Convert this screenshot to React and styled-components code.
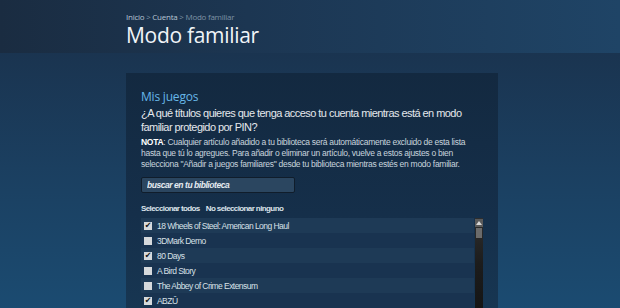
import React from "react";
import styled, { createGlobalStyle } from "styled-components";

const GlobalStyle = createGlobalStyle`
  html, body {
    margin: 0;
    padding: 0;
  }
  body {
    width: 620px;
    height: 308px;
    overflow: hidden;
    background: #1a3350;
    font-family: "Liberation Sans", Arial, sans-serif;
  }
`;

const games = [
  { name: "18 Wheels of Steel: American Long Haul", checked: true },
  { name: "3DMark Demo", checked: false },
  { name: "80 Days", checked: true },
  { name: "A Bird Story", checked: false },
  { name: "The Abbey of Crime Extensum", checked: false },
  { name: "ABZÛ", checked: true },
];

const App = () => {
  return (
    <Page>
      <GlobalStyle />
      <Header>
        <Crumbs>
          <a>Inicio</a> &gt; <a>Cuenta</a> &gt; <span>Modo familiar</span>
        </Crumbs>
        <Title>Modo familiar</Title>
      </Header>
      <Body>
        <Panel>
          <SectionTitle>Mis juegos</SectionTitle>
          <Question>
            ¿A qué títulos quieres que tenga acceso tu cuenta mientras está en modo
            <br />
            familiar protegido por PIN?
          </Question>
          <Note>
            <b>NOTA</b>: Cualquier artículo añadido a tu biblioteca será automáticamente excluido de esta lista
            <br />
            hasta que tú lo agregues. Para añadir o eliminar un artículo, vuelve a estos ajustes o bien
            <br />
            selecciona "Añadir a juegos familiares" desde tu biblioteca mientras estés en modo familiar.
          </Note>
          <Search placeholder="buscar en tu biblioteca" />
          <SelectLinks>
            <a>Seleccionar todos</a>
            <a>No seleccionar ninguno</a>
          </SelectLinks>
          <ListWrap>
            <List>
              {games.map((g, i) => (
                <Row key={g.name} $odd={i % 2 === 0}>
                  <Box $checked={g.checked}>{g.checked ? "✔" : ""}</Box>
                  {g.name}
                </Row>
              ))}
            </List>
            <Scrollbar>
              <ScrollBtn>
                <svg width="6" height="4" viewBox="0 0 6 4">
                  <path d="M0 4 L3 0 L6 4 Z" fill="#d8d8d8" />
                </svg>
              </ScrollBtn>
              <Thumb />
            </Scrollbar>
          </ListWrap>
        </Panel>
      </Body>
    </Page>
  );
};

const Page = styled.div`
  width: 620px;
  height: 308px;
  display: flex;
  flex-direction: column;
  overflow: hidden;
`;

const Header = styled.div`
  flex-shrink: 0;
  height: 53px;
  box-sizing: border-box;
  padding: 11px 0 0 126px;
  background: linear-gradient(to right, #1a2c41 0%, #1c3652 40%, #1f4466 100%);
`;

const Crumbs = styled.div`
  font-family: "Open Sans", sans-serif;
  font-size: 8px;
  line-height: 12px;
  color: #7f96a8;
  letter-spacing: -0.25px;
  a {
    color: #b7c6d3;
  }
  span {
    color: #7d92a4;
  }
`;

const Title = styled.h1`
  margin: 0;
  font-family: "Open Sans", sans-serif;
  font-weight: 400;
  font-size: 21px;
  line-height: 24px;
  color: #f0f4f8;
  letter-spacing: -0.3px;
`;

const Body = styled.div`
  flex: 1;
  min-height: 0;
  padding: 20px 0 0 126px;
  background: linear-gradient(to bottom, #1a3450 0%, #1b3f60 45%, #1b4b71 100%);
`;

const Panel = styled.div`
  width: 372px;
  height: 100%;
  box-sizing: border-box;
  padding: 16px 0 0 15px;
  overflow: hidden;
  background: linear-gradient(to bottom, #132940 0%, #152f4a 60%, #173652 100%);
`;

const SectionTitle = styled.h2`
  margin: 0;
  font-family: "Open Sans", sans-serif;
  font-weight: 400;
  font-size: 12px;
  line-height: 16px;
  color: #67b7e8;
  letter-spacing: -0.2px;
`;

const Question = styled.p`
  margin: 1px 0 0;
  font-size: 11px;
  line-height: 14px;
  color: #e4e8ec;
  letter-spacing: -0.55px;
  white-space: nowrap;
`;

const Note = styled.p`
  margin: 3px 0 0;
  font-size: 8.5px;
  line-height: 11px;
  color: #c9d4de;
  letter-spacing: -0.28px;
  white-space: nowrap;
  b {
    color: #ffffff;
  }
`;

const Search = styled.input`
  display: block;
  margin-top: 7px;
  width: 154px;
  height: 16px;
  box-sizing: border-box;
  padding: 0 5px;
  border: 1px solid #101d2b;
  border-radius: 2px;
  background: #2b4660;
  font-family: "Liberation Sans", Arial, sans-serif;
  font-size: 8.5px;
  font-weight: 700;
  font-style: italic;
  letter-spacing: -0.45px;
  color: #e6ecf1;
  outline: none;
  &::placeholder {
    color: #e6ecf1;
  }
`;

const SelectLinks = styled.div`
  display: flex;
  gap: 6px;
  margin-top: 10px;
  font-size: 8px;
  line-height: 11px;
  font-weight: 700;
  color: #dce3ea;
  letter-spacing: -0.6px;
`;

const ListWrap = styled.div`
  display: flex;
  margin-top: 4px;
  width: 342px;
`;

const List = styled.div`
  flex: 1;
`;

const Row = styled.div`
  display: flex;
  align-items: center;
  height: 15px;
  padding-left: 3px;
  gap: 5px;
  font-size: 8.5px;
  color: #d8e0e7;
  letter-spacing: -0.55px;
  background: ${(p) => (p.$odd ? "#1e3a56" : "#193350")};
`;

const Box = styled.span`
  width: 8px;
  height: 8px;
  box-sizing: border-box;
  display: flex;
  align-items: center;
  justify-content: center;
  background: #d6d9dc;
  color: #111;
  font-size: 8px;
  line-height: 8px;
  letter-spacing: 0;
  font-family: "DejaVu Sans", sans-serif;
`;

const Scrollbar = styled.div`
  width: 8px;
  margin-left: 1px;
  height: 92px;
  display: flex;
  flex-direction: column;
  gap: 1px;
  padding-top: 1px;
  background: linear-gradient(to bottom, #2e2e2e 0%, #1c1c1c 50%, #151515 100%);
`;

const ScrollBtn = styled.div`
  height: 8px;
  display: flex;
  align-items: center;
  justify-content: center;
  background: #5a5a5a;
`;

const Thumb = styled.div`
  height: 10px;
  margin: 0 1px;
  background: #6b6b6b;
`;

export default App;
